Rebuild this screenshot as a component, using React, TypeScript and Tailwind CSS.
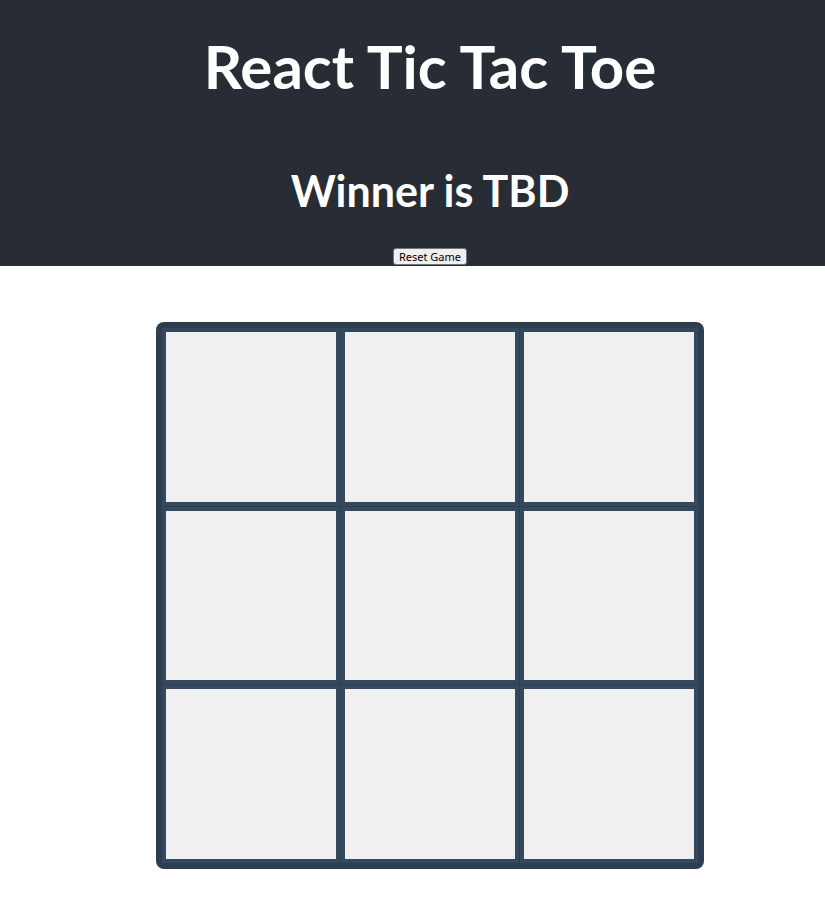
export default function App() {
  const cells = Array.from({ length: 9 }, (_, i) => i)

  return (
    <div className="overflow-x-hidden">
      <div className="w-[860px] min-h-[909px] bg-white" style={{ fontFamily: 'Lato, "Open Sans", sans-serif' }}>
        <header className="h-[266px] bg-[#282c34] flex flex-col items-center text-white">
          <h1 className="mt-[30px] text-[60px] leading-[72px] font-bold">React Tic Tac Toe</h1>
          <h2 className="mt-[64px] text-[43px] leading-[50px] font-bold">Winner is TBD</h2>
          <button
            className="mt-[32px] h-[17px] px-[5px] rounded-[3px] border border-[#767676] bg-[#efefef] text-black text-[11px] leading-[15px]"
            style={{ fontFamily: '"Noto Sans", sans-serif' }}>
            Reset Game
          </button>
        </header>
        <main className="flex justify-center pt-[56px] pb-[40px]">
          <div className="w-[548px] h-[547px] rounded-[8px] bg-[#2c3e50] p-[6px] grid grid-cols-3 grid-rows-3 gap-[1px]">
            {cells.map((i) => (
              <div key={i} className="border-4 border-[#34495e] bg-[#f0f0f0]" />
            ))}
          </div>
        </main>
      </div>
    </div>
  )
}
